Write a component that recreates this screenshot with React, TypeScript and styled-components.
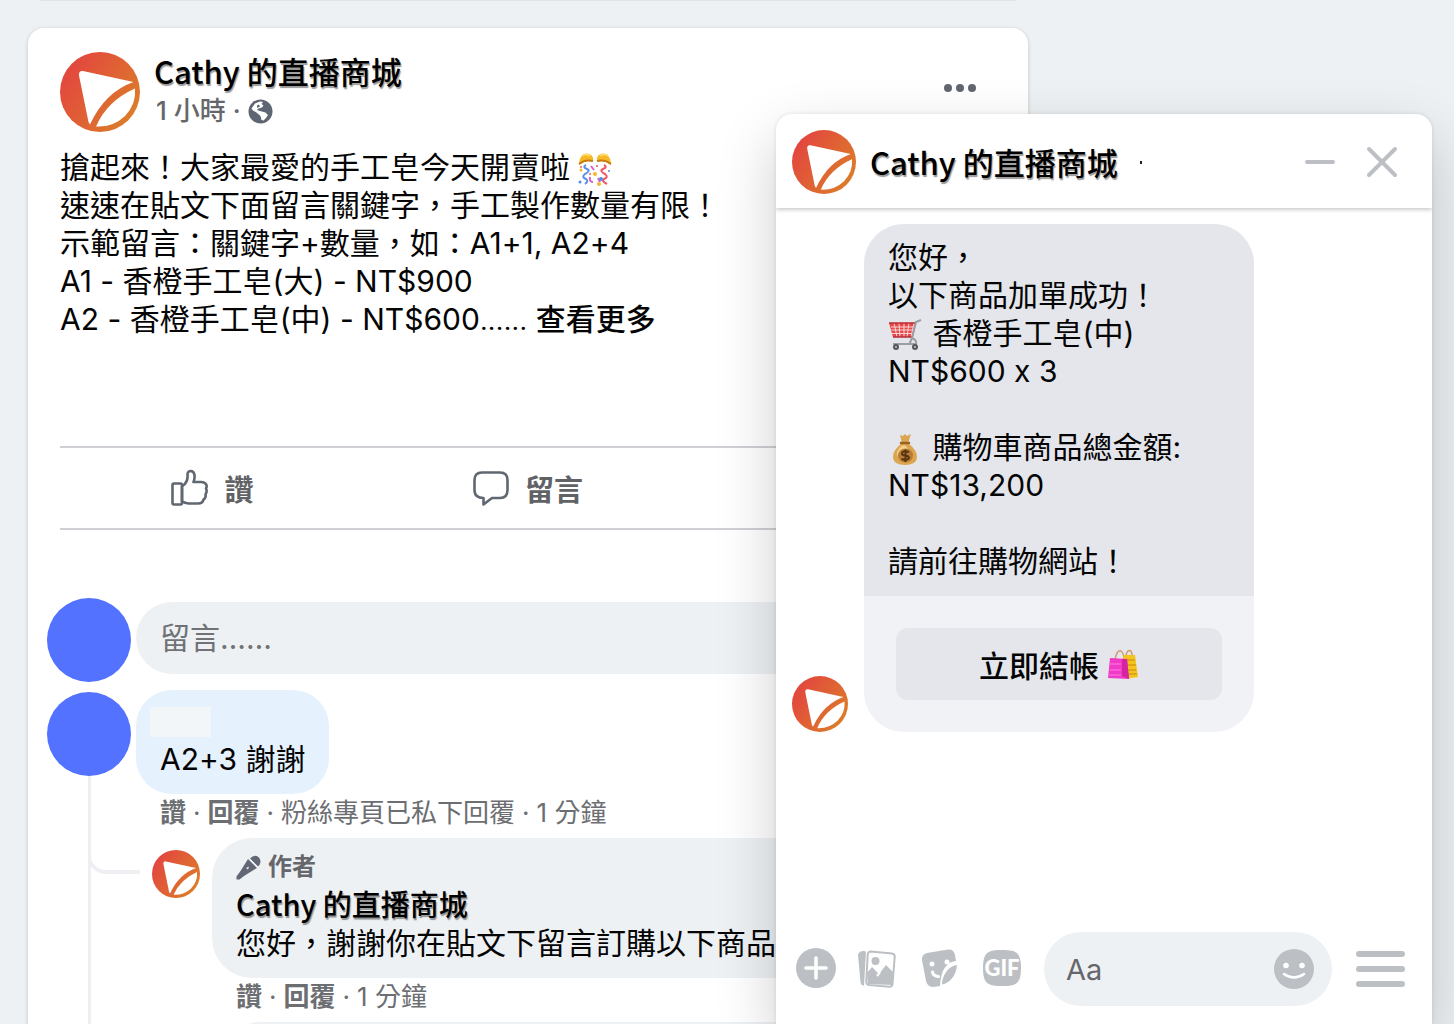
import React, { useId } from "react";
import styled, { createGlobalStyle } from "styled-components";

const latin = `Inter, "Noto Sans CJK TC", sans-serif`;
const cjk = `"Noto Sans CJK TC", "Noto Sans", sans-serif`;

const GlobalStyle = createGlobalStyle`
  *, *::before, *::after { box-sizing: border-box; }
  body {
    margin: 0;
    background: #edf1f4;
    font-family: ${latin};
    font-variant-ligatures: no-contextual;
    color: #050505;
  }
  button, input { font: inherit; color: inherit; }
  button { border: 0; padding: 0; background: none; cursor: pointer; }
  svg { display: block; flex: none; }
`;

const Page = styled.div`
  position: relative;
  height: 100vh;
  overflow: hidden;
  padding: 0 28px;
`;

const PreviousCardEdge = styled.div`
  max-width: 976px;
  height: 1px;
  margin: 0 12px 27px;
  background: #e2e5e8;
`;

const Card = styled.article`
  max-width: 1000px;
  min-height: 100vh;
  background: #fff;
  border-radius: 16px;
  box-shadow: 0 1px 4px rgba(0, 0, 0, 0.18);
  padding: 24px 32px 0;
`;

const PostHeader = styled.header`
  display: flex;
  gap: 14px;
  height: 80px;
`;

const PostHeading = styled.div`
  flex: 1;
`;

const ShopName = styled.h2<{ $size?: number }>`
  margin: 0;
  font-family: ${cjk};
  font-size: ${(p) => p.$size ?? 31}px;
  line-height: 38px;
  font-weight: 500;
  color: #000;
  text-shadow: 1px 2px 1px rgba(0, 0, 0, 0.4);
  white-space: nowrap;
`;

const PostMeta = styled.div`
  display: flex;
  align-items: center;
  gap: 7px;
  padding-left: 2px;
  font-size: 26px;
  line-height: 42px;
  font-weight: 500;
  color: #65676b;
`;

const MoreButton = styled.button`
  align-self: flex-start;
  padding: 26px 20px 0;
`;

const PostText = styled.p`
  margin: 16px 0 107px;
  font-size: 30px;
  line-height: 38px;
  font-weight: 400;
`;

const Ellipsis = styled.span`
  font-family: Roboto, sans-serif;
`;

const InlineEmoji = styled.svg<{ $gap?: number }>`
  display: inline-block;
  vertical-align: -8px;
  margin-right: ${(p) => p.$gap ?? 0}px;
`;

const SeeMore = styled.button`
  font-weight: 500;
  line-height: 38px;
`;

const ActionBar = styled.div`
  display: grid;
  grid-template-columns: repeat(3, 1fr);
  gap: 12px;
  height: 84px;
  border-top: 2px solid #ced0d4;
  border-bottom: 2px solid #ced0d4;
`;

const ActionButton = styled.button`
  display: flex;
  align-items: center;
  justify-content: center;
  gap: 16px;
  font-size: 29px;
  font-weight: 600;
  color: #606266;
`;

const Comments = styled.section`
  margin: 68px 0 0 -13px;
`;

const Composer = styled.div`
  display: flex;
  align-items: flex-start;
  gap: 5px;
`;

const PersonAvatar = styled.div`
  flex: none;
  width: 84px;
  height: 84px;
  border-radius: 50%;
  background: #5272ff;
`;

const CommentInput = styled.input`
  flex: 1;
  min-width: 0;
  height: 72px;
  margin-top: 4px;
  border: 0;
  border-radius: 36px;
  padding: 0 24px;
  background: #eef1f4;
  font-size: 30px;
  outline: none;
  &::placeholder { color: #707276; opacity: 1; }
`;

const Thread = styled.div`
  display: flex;
  gap: 5px;
  margin-top: 8px;
`;

const Rail = styled.div`
  display: flex;
  flex-direction: column;
  align-items: center;
  padding-top: 2px;
  &::after {
    content: "";
    flex: 1;
    width: 3px;
    background: #edeff2;
  }
`;

const ThreadBody = styled.div`
  flex: 1;
  min-width: 0;
`;

const CommentBubble = styled.div`
  display: inline-block;
  height: 104px;
  border-radius: 36px;
  padding: 17px 24px 0;
  background: #e5f1fd;
  font-size: 30px;
  line-height: 44px;
  vertical-align: top;
`;

const MaskedName = styled.div`
  width: 61px;
  height: 30px;
  margin-left: -10px;
  background: #f3f6f8;
`;

const Links = styled.div`
  display: flex;
  gap: 7px;
  padding-left: 24px;
  font-size: 26px;
  line-height: 38px;
  color: #6c6e72;
`;

const TextLink = styled.button`
  font-weight: 600;
`;

const Reply = styled.div`
  position: relative;
  display: flex;
  gap: 12px;
  padding: 6px 0 0 16px;
  &::before {
    content: "";
    position: absolute;
    left: -48px;
    top: -20px;
    width: 52px;
    height: 62px;
    border: solid #edeff2;
    border-width: 0 0 4px 3px;
    border-bottom-left-radius: 18px;
  }
`;

const ReplyAvatar = styled.div`
  padding-top: 12px;
`;

const ReplyBody = styled.div`
  flex: 1;
  min-width: 0;
`;

const ReplyBubble = styled.div`
  height: 140px;
  border-radius: 40px;
  padding: 12px 24px 0;
  background: #eef1f4;
  font-size: 30px;
  line-height: 42px;
  white-space: nowrap;
  overflow: hidden;
`;

const AuthorTag = styled.div`
  display: flex;
  align-items: center;
  gap: 7px;
  font-size: 24px;
  line-height: 34px;
  font-weight: 600;
  color: #65676b;
`;

const NextBubble = styled.div`
  height: 80px;
  margin: 6px 0 0 12px;
  border-radius: 36px 36px 0 0;
  background: #eef1f4;
`;

const ChatWindow = styled.aside`
  position: absolute;
  top: 114px;
  right: 22px;
  bottom: 0;
  width: 656px;
  max-width: 90vw;
  display: flex;
  flex-direction: column;
  overflow: hidden;
  background: #fff;
  border-radius: 16px 16px 0 0;
  box-shadow: 0 0 4px rgba(0, 0, 0, 0.1), 0 24px 60px rgba(0, 0, 0, 0.2);
`;

const ChatHeader = styled.header`
  display: flex;
  align-items: center;
  gap: 14px;
  height: 94px;
  padding: 2px 34px 0 16px;
  box-shadow: 0 2px 4px rgba(0, 0, 0, 0.2);
`;

const ChatTitle = styled.div`
  flex: 1;
  display: flex;
  align-items: center;
  gap: 22px;
`;

const StatusDot = styled.span`
  width: 2px;
  height: 3px;
  background: #222;
`;

const HeaderButtons = styled.div`
  display: flex;
  gap: 30px;
`;

const Messages = styled.div`
  flex: 1;
  padding: 16px 16px 0;
`;

const MessageRow = styled.div`
  display: flex;
  align-items: flex-end;
  gap: 16px;
`;

const Message = styled.div`
  width: 390px;
  border-radius: 40px;
  overflow: hidden;
  background: #f0f2f6;
`;

const MessageText = styled.p`
  margin: 0;
  padding: 14px 24px 16px;
  background: #e4e6eb;
  font-size: 30px;
  line-height: 38px;
`;

const MessageAction = styled.div`
  padding: 32px;
`;

const CheckoutButton = styled.button`
  display: flex;
  align-items: center;
  justify-content: center;
  gap: 8px;
  width: 100%;
  height: 72px;
  border-radius: 12px;
  background: #e4e6eb;
  font-size: 30px;
  font-weight: 500;
`;

const ChatFooter = styled.footer`
  display: flex;
  align-items: center;
  padding: 0 27px 18px 20px;
`;

const Tools = styled.div`
  display: flex;
  flex: none;
  gap: 22px;
  margin-bottom: 2px;
`;

const MessageField = styled.label`
  flex: 1;
  min-width: 0;
  display: flex;
  align-items: center;
  height: 74px;
  margin: 0 24px 0 22px;
  padding: 0 18px 0 22px;
  border-radius: 37px;
  background: #eef1f4;
`;

const MessageInput = styled.input`
  flex: 1;
  min-width: 0;
  width: 100%;
  border: 0;
  padding: 0;
  background: none;
  outline: none;
  font-size: 29px;
  &::placeholder { color: #65676b; opacity: 1; }
`;

const Logo = ({ size }: { size: number }) => {
  const id = useId();
  return (
    <svg width={size} height={size} viewBox="0 0 80 80" aria-hidden="true">
      <defs>
        <linearGradient id={id} x1="0.05" y1="0.25" x2="0.9" y2="0.8">
          <stop offset="0" stopColor="#e3463f" />
          <stop offset="1" stopColor="#dc7b2a" />
        </linearGradient>
      </defs>
      <circle cx="40" cy="40" r="40" fill={`url(#${id})`} />
      <path d="M19 23.5Q18.500 18.500 23 19L73.500 30Q45 40 30 72.500L28.500 70Z" fill="#fff" />
      <path d="M75 36.500Q76.500 52 65 64Q53 75.500 36 74.500Q47 49 75 36.500Z" fill="#fff" />
    </svg>
  );
};

const Globe = () => (
  <svg width="25" height="25" viewBox="0 0 25 25" aria-hidden="true">
    <circle cx="12.500" cy="12.500" r="12" fill="#5f6673" />
    <path
      d="M7 4.500L12 2.500L15 3L13.500 5L15.500 6.500L14 8.500L10.500 9.500L9 11L12 12L17.500 13.500L20 16L18 19L15.500 21.500L13.500 21L12.500 17L8.500 13.500L5 11.500L3.500 9.500Z"
      fill="#fff"
    />
    <path d="M9 6.500L11 5.500L12 7.500L9 9Z" fill="#5f6673" />
  </svg>
);

const Dots = () => (
  <svg width="32" height="20" viewBox="0 0 32 20" fill="#606770">
    <circle cx="4" cy="10" r="4" /><circle cx="16" cy="10" r="4" /><circle cx="28" cy="10" r="4" />
  </svg>
);

const Like = () => (
  <svg width="38" height="38" viewBox="0 0 38 38" fill="none" stroke="#606770" strokeWidth="2.600" strokeLinejoin="round">
    <path d="M2.500 16Q2.500 14.500 4 14.500H10.500Q12 14.500 12 16V34Q12 35.500 10.500 35.500H4Q2.500 35.500 2.500 34Z" />
    <path d="M12 17.500C17 14 18 10 17.500 5.500C17.500 1 23.500 .500 24.500 6C25 9.500 24 11.500 23.500 13H31C36.500 13 37.500 17 36 19.500C37 21.500 36.500 24 35.500 25.500C36 27.500 35 30 33.500 30.500C33 33.500 30.500 34.500 28 34.500H19C16 34.500 14 33.500 12 32.500Z" />
  </svg>
);

const Speech = () => (
  <svg width="36" height="38" viewBox="0 0 36 38" fill="none" stroke="#606770" strokeWidth="2.600" strokeLinejoin="round">
    <path d="M9 3.500H27Q34.500 3.500 34.500 11V21Q34.500 29 27 29H19L10.500 35.500V29Q1.500 29 1.500 21V11Q1.500 3.500 9 3.500Z" />
  </svg>
);

const Mic = () => (
  <svg width="25" height="25" viewBox="0 0 25 25" fill="#616775">
    <path d="M12 4L21 13L8 21L3.500 24.500H.500V21.500L4.500 16Z" />
    <path d="M14 3.500Q17 .2 21 1Q24.500 3 24.500 7Q24 10 22 11.500Z" />
    <path d="M13.500 3.500L22 12" stroke="#eef1f4" strokeWidth="1" />
    <path d="M10 13L13 11.500L12 14.500Z" fill="#eef1f4" />
  </svg>
);

const PartyEmoji = () => (
  <InlineEmoji width="34" height="34" viewBox="0 0 34 34" aria-hidden="true">
    <path d="M1 11Q2 2 9 1.500Q16 2 15 9Q8 8 1 13Z" fill="#f7b928" />
    <path d="M33 11Q32 2 25 1.500Q18 2 19 9Q26 8 33 13Z" fill="#f7b928" />
    <path d="M1 12Q7 7 15 9M33 12Q27 7 19 9" stroke="#c77a10" strokeWidth="2" fill="none" />
    <path d="M4 3.500Q8 1 12 4M22 4Q26 1 30 3.500" stroke="#ffe07a" strokeWidth="1.500" fill="none" />
    <path d="M8 13Q4 15 9 17Q13 19 7 22Q3 25 8 27Q11 29 7 32" stroke="#5b8fea" strokeWidth="2" fill="none" />
    <path d="M26 13Q30 15 25 17Q21 19 27 22Q31 25 26 27Q23 29 29 32" stroke="#ef5664" strokeWidth="2" fill="none" />
    <path d="M13 14L16 18M12 25Q11 30 15 30M20 26L22 30" stroke="#d960c5" strokeWidth="2" fill="none" />
    <g fill="#f5b82e"><circle cx="17" cy="22" r="2" /><circle cx="21" cy="32" r="2" /><circle cx="3" cy="18" r="1.500" /></g>
    <g fill="#ed5b58"><circle cx="3" cy="15" r="1" /><circle cx="12" cy="22" r="1" /><circle cx="19" cy="14" r="1" /></g>
    <g fill="#558be8"><circle cx="23" cy="27" r="2" /><circle cx="31" cy="19" r="1" /><circle cx="2" cy="30" r="1.500" /></g>
  </InlineEmoji>
);

const CartEmoji = () => (
  <InlineEmoji $gap={2} width="34" height="34" viewBox="0 0 34 34" aria-hidden="true">
    <path d="M1 5H28L25 19H5Z" fill="#e84647" />
    <path d="M3 9H27M3.500 12H26.500M4 15.500H26M6 5L9 19M11 5L12 19M16 5V19M21 5L19 19M26 5L23 19" stroke="#f8d8d8" strokeWidth="1" />
    <path d="M1 5H28M5 19H25" stroke="#b92b34" strokeWidth="1.500" />
    <path d="M33 2L28 4L24 20Q29 22 28 26H5M24 20L21 27" stroke="#9a9da3" strokeWidth="2" fill="none" />
    <g fill="#55585d"><circle cx="8" cy="29" r="3" /><circle cx="27" cy="29" r="3" /></g>
    <g fill="#bfc2c7"><circle cx="8" cy="29" r="1" /><circle cx="27" cy="29" r="1" /></g>
  </InlineEmoji>
);

const MoneyEmoji = () => (
  <InlineEmoji $gap={2} width="34" height="34" viewBox="0 0 34 34" aria-hidden="true">
    <path d="M12 3L15 4L17 2L19 4L23 2L20 11Q30 19 29 26Q28 33 17 33Q6 33 5 26Q4 19 14 11Z" fill="#dca550" />
    <path d="M9 20Q12 14 16 13Q19 14 20 17Q13 16 9 25Z" fill="#f5d088" />
    <path d="M13 11H21" stroke="#9c6320" strokeWidth="2.500" strokeLinecap="round" />
    <ellipse cx="17.500" cy="23.500" rx="7.500" ry="7" fill="#b97c36" />
    <path d="M21 20Q14 18 14 21.500Q14 23.500 17.500 23.500Q21 24 21 26Q20 29 13.500 27M17.500 17.500V30" stroke="#56360f" strokeWidth="2" fill="none" />
  </InlineEmoji>
);

const BagsEmoji = () => (
  <svg width="32" height="32" viewBox="0 0 32 32" aria-hidden="true">
    <path d="M19 8Q20 1 24 3L26 9M8 12Q10 1 14 3Q17 5 17 12" stroke="#d39a70" strokeWidth="1.500" fill="none" />
    <path d="M16 7H28L31 29L19 31Z" fill="#f3c41d" />
    <path d="M20 12H28M20 17H29M21 22H29M21 26H30" stroke="#d99a18" strokeWidth="1.500" />
    <path d="M3 10L20 11L22 31L1 30Z" fill="#f03bc6" />
    <path d="M15 11L20 11L22 31L15 28Z" fill="#d6239f" />
    <path d="M3 16H14M3 22H14M2 27H14" stroke="#fa67d8" strokeWidth="1.500" />
  </svg>
);

const gray = "#bcc0c4";

const Minus = () => (
  <svg width="32" height="32" viewBox="0 0 32 32"><path d="M3 16H29" stroke={gray} strokeWidth="4" strokeLinecap="round" /></svg>
);
const Close = () => (
  <svg width="32" height="32" viewBox="0 0 32 32"><path d="M3 3L29 29M29 3L3 29" stroke={gray} strokeWidth="4" strokeLinecap="round" /></svg>
);
const Plus = () => (
  <svg width="40" height="40" viewBox="0 0 40 40">
    <circle cx="20" cy="20" r="20" fill={gray} />
    <path d="M20 10V30M10 20H30" stroke="#fff" strokeWidth="3.600" strokeLinecap="round" />
  </svg>
);
const Photos = () => (
  <svg width="40" height="40" viewBox="0 0 40 40">
    <path d="M2 4Q4 2.500 8 3.500L6 37.500Q3 38 2.500 34L0 7Q0 5 2 4Z" fill={gray} />
    <path d="M13 3.500L34 5.500Q37 6 36.700 9L34.500 36Q34 39 31 38.700L11 37Q8 36.500 8.300 33.500L9.700 6.500Q10 3.500 13 3.500Z" fill="#fff" stroke={gray} strokeWidth="2" />
    <path d="M9 25L14 19L21 26L28 17L35 24L34 37L10 36Z" fill={gray} />
    <circle cx="17.500" cy="13" r="4" fill={gray} />
    <path d="M19 22L21.500 25L19 28" stroke="#fff" strokeWidth="2" fill="none" />
  </svg>
);
const Sticker = () => (
  <svg width="40" height="40" viewBox="0 0 40 40">
    <path d="M7 5L28 1.500Q34 1 35 7L36 13C26 14 21 22 20 38L13 39Q7 38.500 6 33L2 12Q1.500 6.500 7 5Z" fill={gray} />
    <path d="M37 17C36 28 30 35 22 36.500C22 28 28 18 37 17Z" fill={gray} />
    <circle cx="12" cy="16" r="2.500" fill="#fff" /><circle cx="27" cy="14" r="2.500" fill="#fff" />
    <path d="M12.500 24Q13 28 18.500 28.500" stroke="#fff" strokeWidth="3" fill="none" strokeLinecap="round" />
  </svg>
);
const Gif = () => (
  <svg width="40" height="40" viewBox="0 0 40 40">
    <path d="M20 2C34 2 39 4 39 20C39 36 34 38 20 38C6 38 1 36 1 20C1 4 6 2 20 2Z" fill={gray} />
    <text x="20" y="28" textAnchor="middle" fontFamily="Lato, sans-serif" fontSize="22" fontWeight="900" fill="#fff">GIF</text>
  </svg>
);
const Smile = () => (
  <svg width="40" height="40" viewBox="0 0 40 40">
    <circle cx="20" cy="20" r="20" fill={gray} />
    <circle cx="12" cy="16.500" r="2.800" fill="#fff" /><circle cx="28" cy="16.500" r="2.800" fill="#fff" />
    <path d="M10 25Q20 32 30 25" stroke="#fff" strokeWidth="2.600" fill="none" strokeLinecap="round" />
  </svg>
);
const Menu = () => (
  <svg width="49" height="38" viewBox="0 0 49 38">
    <path d="M3 4H46M3 19H46M3 34H46" stroke={gray} strokeWidth="6" strokeLinecap="round" />
  </svg>
);

const shop = "Cathy 的直播商城";

export default function App() {
  return (
    <Page lang="zh-Hant-TW">
      <GlobalStyle />
      <PreviousCardEdge />
      <Card>
        <PostHeader>
          <Logo size={80} />
          <PostHeading>
            <ShopName>{shop}</ShopName>
            <PostMeta><span>1 小時</span><span>·</span><Globe /></PostMeta>
          </PostHeading>
          <MoreButton aria-label="更多"><Dots /></MoreButton>
        </PostHeader>
        <PostText>
          搶起來！大家最愛的手工皂今天開賣啦 <PartyEmoji /><br />
          速速在貼文下面留言關鍵字，手工製作數量有限！<br />
          示範留言：關鍵字+數量，如：A1+1, A2+4<br />
          A1 - 香橙手工皂(大) - NT$900<br />
          A2 - 香橙手工皂(中) - NT$600<Ellipsis>......</Ellipsis> <SeeMore>查看更多</SeeMore>
        </PostText>
        <ActionBar>
          <ActionButton><Like />讚</ActionButton>
          <ActionButton><Speech />留言</ActionButton>
        </ActionBar>
        <Comments>
          <Composer>
            <PersonAvatar />
            <CommentInput aria-label="留言" placeholder="留言……" />
          </Composer>
          <Thread>
            <Rail><PersonAvatar /></Rail>
            <ThreadBody>
              <CommentBubble><MaskedName />A2+3 謝謝</CommentBubble>
              <Links>
                <TextLink>讚</TextLink><span>·</span>
                <TextLink>回覆</TextLink><span>·</span>
                <span>粉絲專頁已私下回覆</span><span>·</span>
                <span>1 分鐘</span>
              </Links>
              <Reply>
                <ReplyAvatar><Logo size={48} /></ReplyAvatar>
                <ReplyBody>
                  <ReplyBubble>
                    <AuthorTag><Mic />作者</AuthorTag>
                    <ShopName $size={29}>{shop}</ShopName>
                    您好，謝謝你在貼文下留言訂購以下商品
                  </ReplyBubble>
                  <Links>
                    <TextLink>讚</TextLink><span>·</span>
                    <TextLink>回覆</TextLink><span>·</span>
                    <span>1 分鐘</span>
                  </Links>
                  <NextBubble />
                </ReplyBody>
              </Reply>
            </ThreadBody>
          </Thread>
        </Comments>
      </Card>

      <ChatWindow>
        <ChatHeader>
          <Logo size={64} />
          <ChatTitle><ShopName>{shop}</ShopName><StatusDot /></ChatTitle>
          <HeaderButtons>
            <button aria-label="最小化"><Minus /></button>
            <button aria-label="關閉"><Close /></button>
          </HeaderButtons>
        </ChatHeader>
        <Messages>
          <MessageRow>
            <Logo size={56} />
            <Message>
              <MessageText>
                您好，<br />
                以下商品加單成功！<br />
                <CartEmoji /> 香橙手工皂(中)<br />
                NT$600 x 3<br />
                <br />
                <MoneyEmoji /> 購物車商品總金額:<br />
                NT$13,200<br />
                <br />
                請前往購物網站！
              </MessageText>
              <MessageAction>
                <CheckoutButton>立即結帳<BagsEmoji /></CheckoutButton>
              </MessageAction>
            </Message>
          </MessageRow>
        </Messages>
        <ChatFooter>
          <Tools>
            <button aria-label="新增"><Plus /></button>
            <button aria-label="相片"><Photos /></button>
            <button aria-label="貼圖"><Sticker /></button>
            <button aria-label="GIF"><Gif /></button>
          </Tools>
          <MessageField>
            <MessageInput aria-label="訊息" placeholder="Aa" />
            <button aria-label="表情符號"><Smile /></button>
          </MessageField>
          <button aria-label="選單"><Menu /></button>
        </ChatFooter>
      </ChatWindow>
    </Page>
  );
}
